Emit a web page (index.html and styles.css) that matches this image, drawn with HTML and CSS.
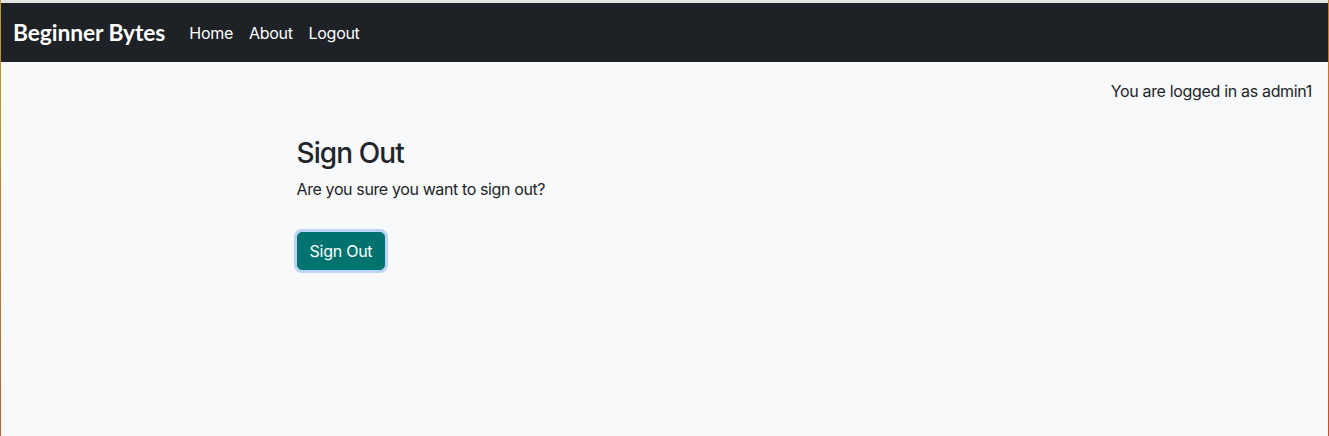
FILE: index.html
```html
<!DOCTYPE html>
<html lang="en">
<head>
<meta charset="utf-8">
<title>Sign Out - Beginner Bytes</title>
<link rel="stylesheet" href="styles.css">
</head>
<body>
<div class="frame">
  <nav class="navbar">
    <a class="brand" href="#">Beginner Bytes</a>
    <ul class="nav-links">
      <li><a href="#">Home</a></li>
      <li><a href="#">About</a></li>
      <li><a href="#">Logout</a></li>
    </ul>
  </nav>
  <div class="status">You are logged in as admin1</div>
  <main class="container">
    <div class="content">
      <h2 class="title">Sign Out</h2>
      <p class="lead">Are you sure you want to sign out?</p>
      <form class="form">
        <button type="button" class="btn">Sign Out</button>
      </form>
    </div>
  </main>
</div>
</body>
</html>
```

FILE: styles.css
```css
* { box-sizing: border-box; }
html, body { margin: 0; padding: 0; height: 100%; }
body {
  background:
    linear-gradient(#b9a032, #c0602a) left top / 1px 100% no-repeat,
    linear-gradient(#c87a28, #c8501e) right top / 1px 100% no-repeat,
    #e3e3e3;
  font-family: Inter, "Noto Sans", "Liberation Sans", sans-serif;
  color: #212529;
  font-size: 16px;
  line-height: 1.5;
  padding: 3px 1px 0;
}
.frame {
  height: 433px;
  background: #f8f9fa;
  overflow: hidden;
}
.navbar {
  background: #1e2125;
  height: 59px;
  display: flex;
  align-items: center;
  padding: 0 12px;
}
.brand {
  font-family: Lato, "Liberation Sans", sans-serif;
  font-weight: 700;
  font-size: 22.8px;
  color: #fff;
  text-decoration: none;
  margin-right: 16px;
  letter-spacing: -0.1px;
}
.nav-links {
  list-style: none;
  display: flex;
  margin: 0;
  padding: 0;
}
.nav-links a {
  display: block;
  color: #fff;
  text-decoration: none;
  padding: 8px 8px;
  font-size: 16px;
  letter-spacing: -0.3px;
}
.status {
  text-align: right;
  padding: 17px 16px 0 0;
  letter-spacing: -0.33px;
}
.container {
  width: 1140px;
  margin: 0 auto;
  padding: 0 12px;
}
.content {
  margin-left: 190px;
  padding-top: 34px;
}
.title {
  font-size: 28px;
  font-weight: 500;
  line-height: 1.2;
  margin: 0 0 6px;
  letter-spacing: -0.9px;
}
.lead {
  margin: 0;
  letter-spacing: -0.38px;
}
.form {
  display: flex;
  margin-top: 31px;
}
.btn {
  font-family: inherit;
  font-size: 16px;
  line-height: 1.5;
  color: #fff;
  background: #00736e;
  border: 1px solid #00736e;
  border-radius: 5px;
  padding: 6px 12px;
  box-shadow: 0 0 0 3px #bcd4f8;
  letter-spacing: -0.25px;
  cursor: pointer;
}
```
